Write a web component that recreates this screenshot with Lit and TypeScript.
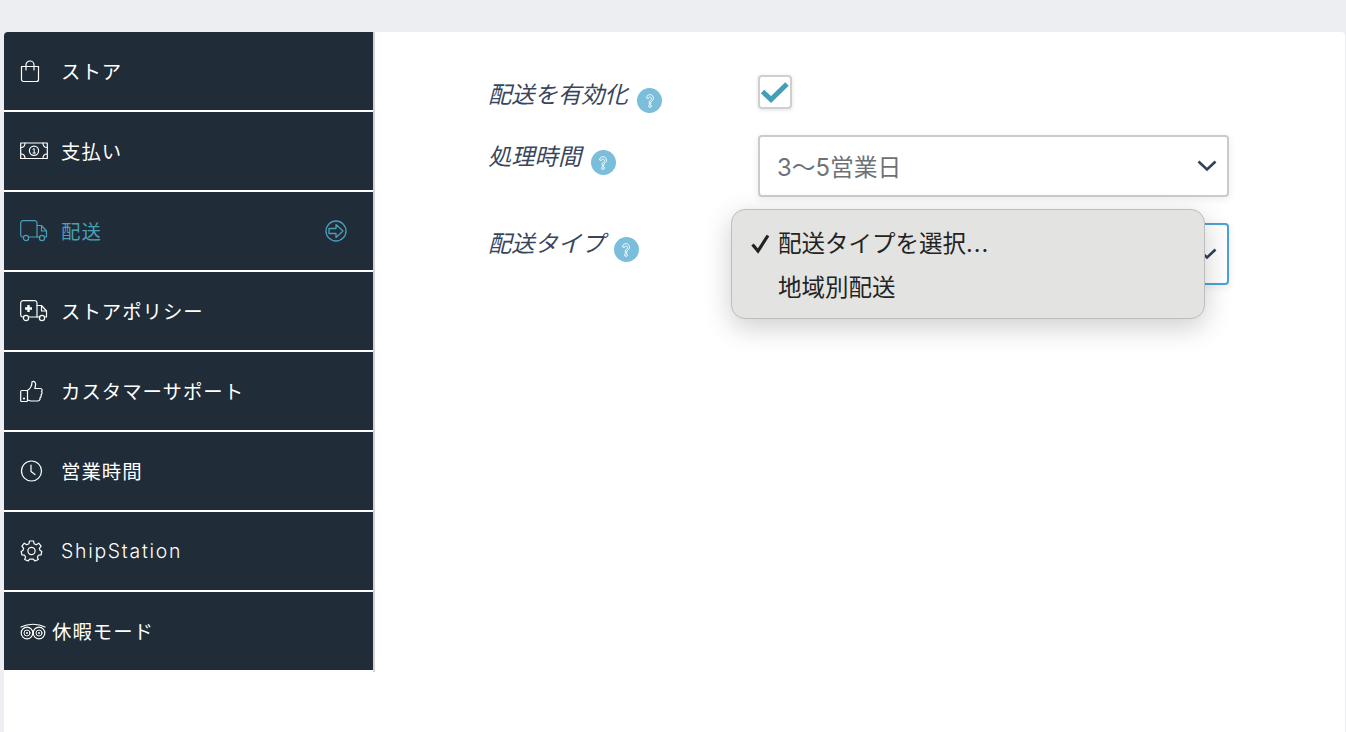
import { LitElement, html, css, svg } from "lit";
import { customElement } from "lit/decorators.js";

const ic = (w: number, h: number, body: unknown) =>
  html`<svg class="ic" width=${w} height=${h} viewBox="0 0 ${w} ${h}" fill="none" stroke="currentColor" stroke-width="1.2" stroke-linecap="round" stroke-linejoin="round">${body}</svg>`;

const truck = svg`<path d="M3 17H2.5A2 2 0 0 1 .7 15V3A2.3 2.3 0 0 1 3 .7H15A2.3 2.3 0 0 1 17 3V17H9"/><path d="M17 5.5H21.5L26.5 11V17H25"/><path d="M20 17H17M21.5 6V11H26.5"/><circle cx="6" cy="18" r="2.6"/><circle cx="22" cy="18" r="2.6"/>`;

const items = [
  { t: "ストア", i: ic(20, 23, svg`<path d="M1.5 6.5H18.5V19.5A2 2 0 0 1 16.5 21.5H3.5A2 2 0 0 1 1.5 19.5Z"/><path d="M6 10V5A4 4 0 0 1 14 5V10"/>`) },
  { t: "支払い", i: ic(28, 18, svg`<rect x=".7" y="1" width="26.6" height="15.5"/><path d="M1 5.5C3.5 5.5 5 4 5 1M27 5.5C24.5 5.5 23 4 23 1M1 12C3.5 12 5 13.5 5 16.5M27 12C24.5 12 23 13.5 23 16.5"/><circle cx="14" cy="8.7" r="4.6"/><path d="M13 7.2L14.2 6.6V11M13 11H15.4" stroke-width="1"/>`) },
  { t: "配送", i: ic(28, 22, truck), active: true },
  { t: "ストアポリシー", i: ic(28, 22, svg`${truck}<path d="M8.5 5V12M5 8.5H12" stroke-width="2.4" stroke-linecap="butt"/>`) },
  { t: "カスタマーサポート", i: ic(23, 23, svg`<path d="M7.5 10.5C10.5 8.5 12 5.5 12 1.7C14.5 .5 16 2.5 15.5 5.5L14.8 8.5H20.5C22.2 8.5 22.5 10.5 21.5 11.5C22.3 12.8 22 14 21 14.7C21.5 16 21 17.2 20 17.8C20.3 19.8 19.2 21 17.5 21H12C10 21 9 20 7.5 20"/><rect x=".7" y="10.5" width="6.8" height="11" rx="1"/><circle cx="4" cy="18.5" r=".5"/>`) },
  { t: "営業時間", i: ic(23, 22, svg`<circle cx="11.5" cy="11" r="10"/><path d="M11 5V11.5L15 14.5"/>`) },
  { t: "ShipStation", i: ic(23, 22, svg`<g transform="translate(.5 0)"><circle cx="11" cy="11" r="3.6"/><path d="M9 1H13L13.6 3.8 15.8 4.7 18.2 3.2 20.6 6.2 18.9 8.4 19.4 10.2 21.3 11.5 20.5 15 18 15.2 16.9 17 17.8 19.5 14.5 21 12.8 19.2H9.2L7.5 21 4.2 19.5 5.1 17 4 15.2 1.5 15 .7 11.5 2.6 10.2 3.1 8.4 1.4 6.2 3.8 3.2 6.2 4.7 8.4 3.8Z"/></g>`), latin: true },
  { t: "休暇モード", i: ic(26, 17, svg`<path d="M1 4C8 .3 18 .3 25 4"/><circle cx="7" cy="10" r="5.8"/><circle cx="19" cy="10" r="5.8"/><circle cx="7" cy="10" r="3" stroke-width="1"/><circle cx="19" cy="10" r="3" stroke-width="1"/><circle cx="7" cy="10" r="1" fill="currentColor" stroke="none"/><circle cx="19" cy="10" r="1" fill="currentColor" stroke="none"/>`), narrow: true },
];

const help = html`<span class="help"><svg width="12" height="16" viewBox="0 0 12 16" fill="none" stroke="#fff" stroke-width=".9"><path d="M2.5 5A3.5 3.5 0 1 1 8 8L6.8 9V10.5H5.2V8.3L6.8 7A1.6 1.6 0 1 0 4.3 5.5Z"/><circle cx="6" cy="13" r="1.4"/></svg></span>`;
const chevron = html`<svg class="chev" width="20" height="12" viewBox="0 0 20 12" fill="none" stroke="#34415a" stroke-width="2.6"><path d="M1.5 1.5L10 9.5L18.5 1.5"/></svg>`;

@customElement("app-root")
export class AppRoot extends LitElement {
  static styles = css`
    :host { display: block; height: 732px; overflow: hidden; background: #eceef2; padding: 32px 1px 0 4px; box-sizing: border-box;
      font-family: "Inter", "Noto Sans CJK JP", "Noto Sans", sans-serif; }
    .card { background: #fff; border-radius: 4px 4px 0 0; height: 700px; display: flex; align-items: flex-start; overflow: hidden; }
    nav { width: 369px; flex: none; border-right: 2px solid #d2d3d5; }
    .item { height: 78px; margin-bottom: 2px; background: #202c37; color: #fff; display: flex; align-items: center; padding: 0 26px 0 16px; box-sizing: border-box;
      font-size: 19.4px; letter-spacing: 1px; font-weight: 400; }
    .item.active { color: #4a9fb8; }
    .item.latin .lbl { letter-spacing: 1.75px; font-weight: 300; }
    .icw { width: 41px; flex: none; display: flex; align-items: center; }
    .icw.narrow { width: 32px; }
    .ic { display: block; }
    .lbl { flex: 1; margin-top: -1px; }
    main { flex: 1; position: relative; height: 100%; padding: 43px 116px 0 113px; box-sizing: border-box; }
    .row { display: grid; grid-template-columns: 270px 471px; }
    .label { font-style: italic; font-size: 23.3px; color: #38465c; display: flex; align-items: flex-start; font-weight: 400; line-height: 38px; }
    .help { width: 25px; height: 25px; border-radius: 50%; background: #7abedc; display: inline-flex; align-items: center; justify-content: center; margin: 12px 0 0 9.5px; font-style: normal; }
    .r1 { height: 60px; }
    .r2 { height: 88px; }
    .r3 { height: 62px; }
    .r1 .label { margin-top: 1px; }
    .r2 .label { margin-top: 3px; }
    .r3 .label { margin-top: 2px; }
    .check { width: 34px; height: 34px; box-sizing: border-box; border: 2px solid #cfcfcf; border-radius: 4px; background: #fff; display: flex; align-items: center; justify-content: center; box-shadow: 0 1px 4px rgba(0,0,0,.12); }
    .select { height: 62px; box-sizing: border-box; border: 2px solid #cbcbcb; border-radius: 4px; background: #fff; display: flex; align-items: center; justify-content: space-between; padding: 0 10px 0 17px; font-size: 23.8px; font-weight: 400; color: #6e7276; box-shadow: 0 2px 8px rgba(0,0,0,.08); }
    .val { margin-top: -2px; }
    .select.focus { border-color: #4aa3d6; }
    .menu { position: absolute; left: 356px; top: 177px; width: 474px; height: 110px; box-sizing: border-box; border: 1px solid #bdbdbb; border-radius: 14px; background: #e3e3e1; box-shadow: 0 8px 28px rgba(0,0,0,.2); color: #232323; font-size: 23.5px; padding: 12px 0 0 46px; }
    .opt { height: 44px; line-height: 44px; position: relative; white-space: nowrap; }
    .dots { letter-spacing: 1px; }
    .tick { position: absolute; left: -28px; top: 12px; }
  `;
  render() {
    return html`<div class="card">
      <nav>
        ${items.map((it) => html`<div class="item ${it.active ? "active" : ""} ${it.latin ? "latin" : ""}">
          <span class="icw ${it.narrow ? "narrow" : ""}">${it.i}</span>
          <span class="lbl">${it.t}</span>
          ${it.active ? html`<svg width="22" height="22" viewBox="0 0 22 22" fill="none" stroke="currentColor" stroke-width="1.3" stroke-linejoin="round"><circle cx="11" cy="11" r="10"/><path d="M4 8.5H11V4.5L18 11L11 17.5V13.5H4Z"/></svg>` : ""}
        </div>`)}
      </nav>
      <main>
        <div class="row r1">
          <div class="label">配送を有効化${help}</div>
          <div><div class="check"><svg width="30" height="24" viewBox="0 0 30 24" fill="none" stroke="#439fb8" stroke-width="5"><path d="M2.5 11.5L11 19.5L27 4"/></svg></div></div>
        </div>
        <div class="row r2">
          <div class="label">処理時間${help}</div>
          <div class="select"><span class="val">3〜5営業日</span>${chevron}</div>
        </div>
        <div class="row r3">
          <div class="label">配送タイプ${help}</div>
          <div class="select focus"><span></span>${chevron}</div>
        </div>
        <div class="menu">
          <div class="opt"><svg class="tick" width="20" height="20" viewBox="0 0 20 20" fill="none" stroke="#232323" stroke-width="3.2"><path d="M2.5 10.5L8 17L18 1.5"/></svg>配送タイプを選択<span class="dots">...</span></div>
          <div class="opt">地域別配送</div>
        </div>
      </main>
    </div>`;
  }
}
